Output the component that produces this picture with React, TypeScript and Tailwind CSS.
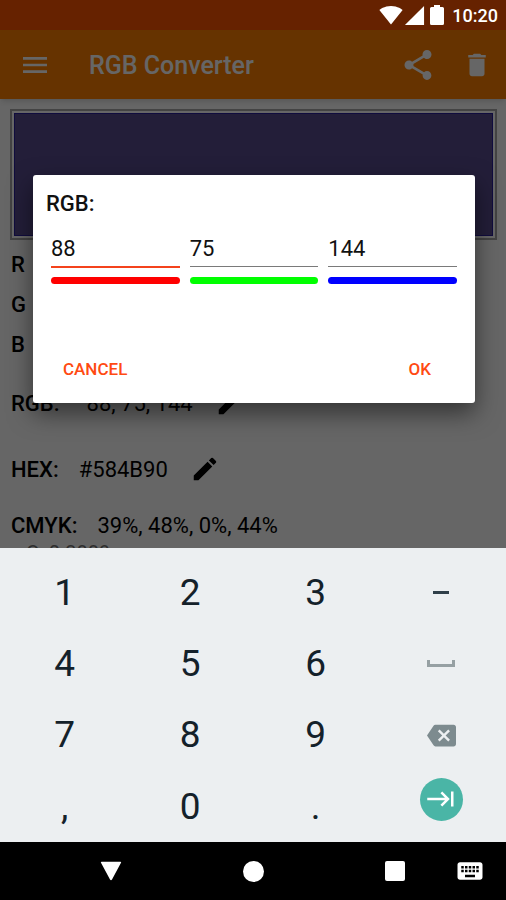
import { useState, type ReactNode } from "react";
import {
  MdBackspace,
  MdDelete,
  MdEdit,
  MdKeyboard,
  MdKeyboardTab,
  MdMenu,
  MdShare,
  MdSignalCellular4Bar,
  MdSignalWifi4Bar,
} from "react-icons/md";

const StatusBar = () => (
  <div className="relative z-10 flex h-[30px] shrink-0 items-center justify-end bg-[#662200] pr-2 text-white">
    <MdSignalWifi4Bar size={24} />
    <MdSignalCellular4Bar size={23} />
    <svg width="14" height="20" viewBox="0 0 14 20" className="ml-1" fill="currentColor">
      <path d="M4 0h6v2h2.500Q14 2 14 3.500v15q0 1.500-1.500 1.500h-11Q0 20 0 18.500v-15Q0 2 1.500 2H4z" />
    </svg>
    <span className="ml-2 pt-[2px] text-[18px] leading-6 font-medium">10:20</span>
  </div>
);

const Toolbar = () => (
  <header className="flex h-[69px] items-center bg-[#ff8000] pr-[14px] pl-[19px] text-white shadow-md">
    <button type="button" aria-label="Open menu">
      <MdMenu size={32} />
    </button>
    <h1 className="ml-[38px] flex-1 pt-[2px] text-[25px] leading-8 font-medium">RGB Converter</h1>
    <button type="button" aria-label="Share">
      <MdShare size={36} />
    </button>
    <button type="button" aria-label="Delete" className="ml-[26px]">
      <MdDelete size={30} />
    </button>
  </header>
);

const ValueRow = ({ label, value, labelClass = "" }: { label: string; value: string; labelClass?: string }) => (
  <div className="flex h-[66px] items-center gap-5">
    <span className={`font-medium ${labelClass}`}>{label}</span>
    <span>{value}</span>
    <button type="button" aria-label={`Edit ${label}`} className="ml-[2px]">
      <MdEdit size={30} />
    </button>
  </div>
);

const ConverterScreen = () => (
  <div className="bg-white text-[22px] text-black">
    <Toolbar />
    <div className="pt-[10px] pr-[9px] pl-[11px]">
      <div className="-ml-px h-[131px] border-2 border-[#a8a8a8] p-[2px]">
        <div className="h-full border border-[#28209c] bg-[#584b90]" />
      </div>
      <div className="mt-1 font-medium">
        {["R", "G", "B"].map((channel) => (
          <div key={channel} className="flex h-10 items-center">
            {channel}
          </div>
        ))}
      </div>
      <div className="mt-[6px]">
        <ValueRow label="RGB:" value="88, 75, 144" labelClass="pr-[7px]" />
        <ValueRow label="HEX:" value="#584B90" />
      </div>
      <div className="mt-2 flex gap-5 leading-8">
        <span className="font-medium">CMYK:</span>
        <span>39%, 48%, 0%, 44%</span>
      </div>
      <div className="pt-px pl-[15px] text-[20px] leading-5 text-neutral-500">C: 0.3889</div>
    </div>
  </div>
);

const channels = [
  { name: "Red", initial: "88", line: "h-[2px] bg-[#f4431c]", bar: "bg-[#ff0000]" },
  { name: "Green", initial: "75", line: "h-px bg-[#7a7a7a]", bar: "bg-[#00ff00]" },
  { name: "Blue", initial: "144", line: "h-px bg-[#7a7a7a]", bar: "bg-[#0000ff]" },
];

const RgbDialog = () => {
  const [values, setValues] = useState(channels.map((c) => c.initial));

  return (
    <div
      role="dialog"
      aria-label="RGB"
      className="absolute top-[145px] right-[31px] left-[33px] rounded-[3px] bg-white px-[18px] pt-[13px] pb-4 text-[22px] text-[#111] shadow-[0_10px_24px_rgba(0,0,0,0.5)]"
    >
      <h2 className="-ml-[5px] leading-8 font-medium">RGB:</h2>
      <div className="mt-3 grid grid-cols-3 gap-[10px]">
        {channels.map((channel, i) => (
          <div key={channel.name}>
            <input
              aria-label={channel.name}
              inputMode="numeric"
              className="block h-[34px] w-full bg-transparent pb-[2px] outline-none"
              value={values[i]}
              onChange={(e) => setValues(values.map((v, j) => (j === i ? e.target.value : v)))}
            />
            <div className="flex h-[11px] items-start">
              <div className={`w-full ${channel.line}`} />
            </div>
            <div className={`h-[7px] rounded-full ${channel.bar}`} />
          </div>
        ))}
      </div>
      <div className="mt-[67px] flex justify-between px-3 text-[17px] leading-9 font-medium text-[#ff4a12]">
        <button type="button">CANCEL</button>
        <button type="button" className="mr-[14px]">
          OK
        </button>
      </div>
    </div>
  );
};

const Key = ({ label, children }: { label?: string; children: ReactNode }) => (
  <button type="button" aria-label={label} className="flex items-center justify-center">
    {children}
  </button>
);

const Keyboard = () => (
  <div className="grid h-[294px] shrink-0 grid-cols-4 grid-rows-4 bg-[#eceff1] px-[2px] pt-[9px] text-[37px] text-[#14212a]">
    <Key>1</Key>
    <Key>2</Key>
    <Key>3</Key>
    <Key label="Minus">
      <span className="h-[3px] w-4 bg-[#2f3f49]" />
    </Key>
    <Key>4</Key>
    <Key>5</Key>
    <Key>6</Key>
    <Key label="Space">
      <span className="h-[7px] w-7 border-x-[3px] border-b-[3px] border-[#96a0a3]" />
    </Key>
    <Key>7</Key>
    <Key>8</Key>
    <Key>9</Key>
    <Key label="Backspace">
      <MdBackspace size={29} className="text-[#7d8b8f]" />
    </Key>
    <Key>,</Key>
    <Key>0</Key>
    <Key>.</Key>
    <Key label="Next">
      <span className="mb-[14px] flex size-[43px] items-center justify-center rounded-full bg-[#4ab5a6] text-white">
        <MdKeyboardTab size={30} />
      </span>
    </Key>
  </div>
);

const NavigationBar = () => (
  <nav className="relative grid h-[58px] shrink-0 grid-cols-3 items-center bg-black px-10 text-white">
    <button type="button" aria-label="Back" className="flex justify-center">
      <svg width="22" height="20" viewBox="0 0 22 20" fill="currentColor">
        <path d="M1.500 0.800h19q1 0 .5 1L12 18.600q-1 1.500-2 0L1 1.800q-.5-1 .5-1z" />
      </svg>
    </button>
    <button type="button" aria-label="Home" className="flex justify-center">
      <span className="size-[21px] rounded-full bg-white" />
    </button>
    <button type="button" aria-label="Recent apps" className="flex justify-center">
      <span className="size-5 rounded-[2px] bg-white" />
    </button>
    <button type="button" aria-label="Switch keyboard" className="absolute top-[14px] right-[21px]">
      <MdKeyboard size={30} />
    </button>
  </nav>
);

const App = () => (
  <div className="flex h-screen flex-col overflow-hidden font-['Roboto',sans-serif]">
    <StatusBar />
    <main className="relative min-h-0 flex-1 overflow-hidden">
      <ConverterScreen />
      <div className="absolute inset-0 bg-black/60" />
      <RgbDialog />
    </main>
    <Keyboard />
    <NavigationBar />
  </div>
);

export default App;
